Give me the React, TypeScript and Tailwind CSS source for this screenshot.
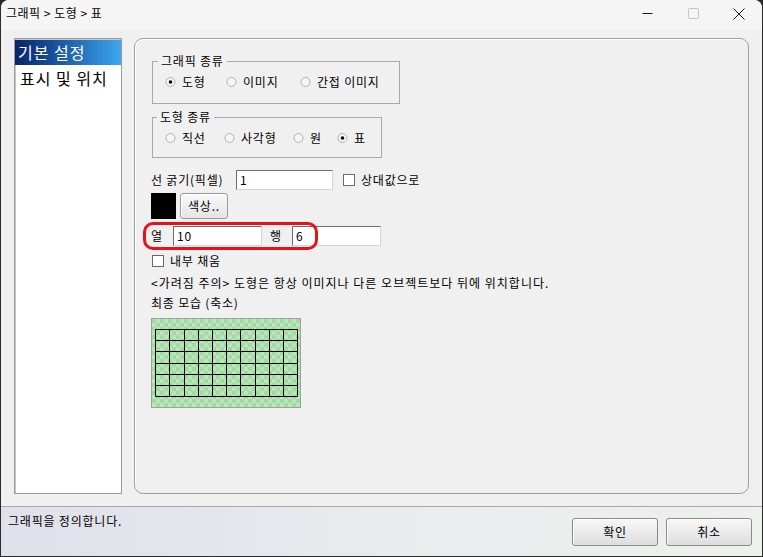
import React from "react";

function Radio({ checked, label, className }: { checked?: boolean; label: string; className?: string }) {
  return (
    <div className={"flex items-center shrink-0 " + (className ?? "")}>
      <svg width="12" height="12" viewBox="0 0 12 12">
        <circle cx="5.5" cy="6" r="4.5" fill="#f6f6f6" stroke="#b0b0b0" />
        {checked && <circle cx="5.5" cy="6" r="1.8" fill="#000" />}
      </svg>
      <span className="ml-[5px] leading-[14px]">{label}</span>
    </div>
  );
}

function Input({ value, className }: { value: string; className: string }) {
  return (
    <div
      className={
        "h-[20px] bg-white border border-t-[#6e6e6e] border-l-[#6e6e6e] border-r-[#d6d6d6] border-b-[#d6d6d6] pl-[3px] leading-[18px] " +
        className
      }
    >
      {value}
    </div>
  );
}

function Check() {
  return <div className="w-[12px] h-[12px] bg-white border border-[#6a6a6a]" />;
}

function Preview() {
  const cols = Array.from({ length: 11 }, (_, i) => Math.floor(3.7 + i * 14.2) + 0.5);
  const rows = [10.5, 21.5, 32.5, 44.5, 55.5, 66.5, 77.5];
  return (
    <div className="w-[150px] h-[90px] border border-[#a0a0a0]">
      <svg width="148" height="88" viewBox="0 0 148 88" className="block">
        <defs>
          <pattern id="chk" width="8" height="8" patternUnits="userSpaceOnUse">
            <rect width="8" height="8" fill="#c3c3c3" />
            <rect x="4" y="0" width="4" height="4" fill="#98fc98" />
            <rect x="0" y="4" width="4" height="4" fill="#98fc98" />
          </pattern>
        </defs>
        <rect width="148" height="88" fill="url(#chk)" />
        {cols.map((x, i) => (
          <line key={"c" + i} x1={x} y1={rows[0]} x2={x} y2={rows[6]} stroke="#000" strokeWidth="1" />
        ))}
        {rows.map((y, i) => (
          <line key={"r" + i} x1={cols[0]} y1={y} x2={cols[10]} y2={y} stroke="#000" strokeWidth="1" />
        ))}
      </svg>
    </div>
  );
}

export default function App() {
  return (
    <div className="w-[763px] h-[557px] bg-[#2b2b2b] overflow-hidden font-['Noto_Sans_CJK_KR','Noto_Sans',sans-serif] text-[12px] tracking-[0.8px] text-black">
      <div className="h-[556px] mx-[1px] rounded-t-[8px] overflow-hidden flex flex-col bg-[#f0f0f0]">
        {/* Title bar */}
        <div className="h-[30px] shrink-0 bg-[#f5f5f5] flex items-start">
          <span className="ml-[5px] mt-[6px] leading-[14px] tracking-[0.5px]">그래픽 &gt; 도형 &gt; 표</span>
          <div className="ml-auto flex">
            <div className="w-[46px] h-[27px] flex items-center justify-center">
              <svg width="11" height="11" viewBox="0 0 11 11">
                <path d="M0.5 5.5H10.5" stroke="#1a1a1a" strokeWidth="1" />
              </svg>
            </div>
            <div className="w-[46px] h-[27px] flex items-center justify-center">
              <svg width="11" height="11" viewBox="0 0 11 11">
                <rect x="0.5" y="0.5" width="10" height="10" rx="1" fill="none" stroke="#c4c4c4" strokeWidth="1" />
              </svg>
            </div>
            <div className="w-[46px] h-[27px] flex items-center justify-center">
              <svg width="12" height="12" viewBox="0 0 12 12">
                <path d="M0.5 0.5L11.5 11.5M11.5 0.5L0.5 11.5" stroke="#1a1a1a" strokeWidth="1" />
              </svg>
            </div>
          </div>
        </div>

        {/* Body */}
        <div className="h-[476px] shrink-0 flex pt-[8px] pb-[12px] pl-[13px] pr-[13px] gap-[12px]">
          {/* Left list */}
          <div className="w-[108px] h-full bg-white border border-[#9a9a9a] shadow-[inset_1px_1px_0_#c8c8c8] pt-[1px] text-[16px] tracking-[1px]">
            <div className="h-[25px] leading-[25px] pl-[3px] text-white bg-linear-to-r from-[#0a246a] to-[#3ea6f0]">
              기본 설정
            </div>
            <div className="h-[26px] leading-[26px] pl-[5px]">표시 및 위치</div>
          </div>

          {/* Right panel */}
          <div className="w-[615px] h-full rounded-[9px] border border-[#a0a0a0] shadow-[inset_1px_1px_0_#ffffff] pl-[16px] pt-[15px] flex flex-col items-start">
            <fieldset className="ml-[1px] w-[248px] border border-[#a8a8a8] pl-[12px] pb-[7px]">
              <legend className="ml-[-7px] px-[3px] leading-[14px]">그래픽 종류</legend>
              <div className="h-[28px] flex items-center">
                <Radio checked label="도형" className="w-[61px]" />
                <Radio label="이미지" className="w-[74px]" />
                <Radio label="간접 이미지" />
              </div>
            </fieldset>

            <fieldset className="ml-[1px] mt-[6px] w-[230px] border border-[#a8a8a8] pl-[12px] pb-[5px]">
              <legend className="ml-[-8px] px-[3px] leading-[14px]">도형 종류</legend>
              <div className="h-[28px] flex items-center">
                <Radio label="직선" className="w-[59px]" />
                <Radio label="사각형" className="w-[69px]" />
                <Radio label="원" className="w-[44px]" />
                <Radio checked label="표" />
              </div>
            </fieldset>

            {/* Line thickness */}
            <div className="mt-[12px] h-[20px] flex items-center">
              <span className="w-[85px] leading-[14px]">선 굵기(픽셀)</span>
              <Input value="1" className="w-[97px]" />
              <div className="ml-[10px]">
                <Check />
              </div>
              <span className="ml-[6px] leading-[14px]">상대값으로</span>
            </div>

            {/* Colour */}
            <div className="mt-[3px] h-[26px] flex items-center gap-[4px]">
              <div className="w-[25px] h-[26px] bg-black" />
              <div className="w-[48px] h-[26px] rounded-[3px] border border-[#9a9a9a] bg-linear-to-b from-[#fafafa] to-[#e4e4e4] shadow-[inset_1px_1px_0_#ffffff] flex items-center justify-center leading-[14px]">
                색상..
              </div>
            </div>

            {/* Columns / rows */}
            <div className="relative mt-[7px] h-[20px] flex items-center">
              <span className="w-[22px] leading-[14px]">열</span>
              <Input value="10" className="w-[89px]" />
              <span className="ml-[8px] w-[22px] leading-[14px]">행</span>
              <Input value="6" className="w-[89px]" />
              <div className="absolute z-10 left-[-8px] top-[-4px] w-[175px] h-[28px] border-[3px] border-[#e8101a] rounded-[10px] pointer-events-none" />
            </div>

            {/* Fill */}
            <div className="mt-[8px] h-[14px] flex items-center">
              <div className="ml-[1px]">
                <Check />
              </div>
              <span className="ml-[6px] leading-[14px]">내부 채움</span>
            </div>

            <div className="mt-[7px] leading-[16px] tracking-[1px]">
              &lt;가려짐 주의&gt; 도형은 항상 이미지나 다른 오브젝트보다 뒤에 위치합니다.
            </div>
            <div className="mt-[4px] leading-[16px]">최종 모습 (축소)</div>

            <div className="mt-[7px]">
              <Preview />
            </div>
          </div>
        </div>

        {/* Status bar */}
        <div className="h-[50px] shrink-0 border-t border-[#a8a8a8] bg-linear-to-r from-[#dfe0ea] via-[#e9ebee] to-[#edf1ec] flex items-start">
          <span className="ml-[7px] mt-[7px] leading-[14px]">그래픽을 정의합니다.</span>
          <div className="ml-auto mr-[10px] mt-[11px] flex gap-[8px]">
            <div className="w-[86px] h-[28px] rounded-[3px] border border-[#8a8a8a] bg-linear-to-b from-[#f7f7f7] to-[#dedede] shadow-[inset_1px_1px_0_#ffffff] flex items-center justify-center leading-[14px]">
              확인
            </div>
            <div className="w-[86px] h-[28px] rounded-[3px] border border-[#8a8a8a] bg-linear-to-b from-[#f7f7f7] to-[#dedede] shadow-[inset_1px_1px_0_#ffffff] flex items-center justify-center leading-[14px]">
              취소
            </div>
          </div>
        </div>
      </div>
    </div>
  );
}
